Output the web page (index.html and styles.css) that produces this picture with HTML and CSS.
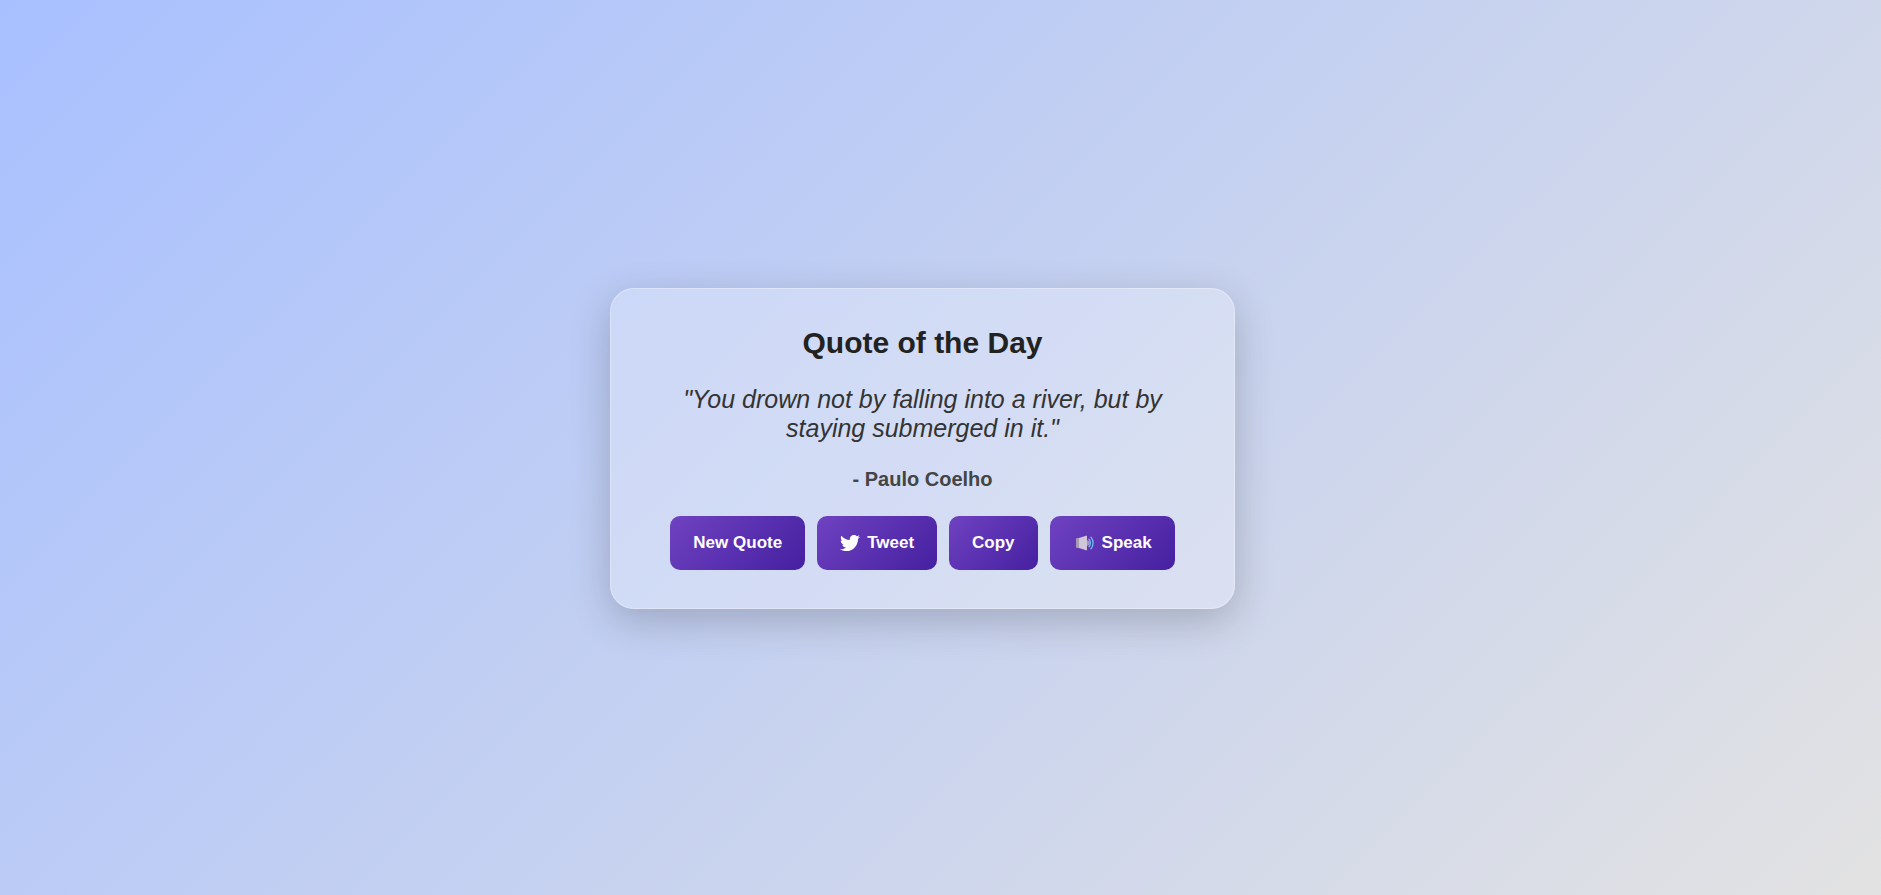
FILE: index.html
```html
<!DOCTYPE html>
<html lang="en">
<head>
    <meta charset="UTF-8">
    <meta name="viewport" content="width=device-width, initial-scale=1.0">
    <link rel="stylesheet" href="styles.css">
    <title>Quote of the Day</title>
</head>
<body>
    <main class="quote-box">
        <h1 class="title">Quote of the Day</h1>
        <p class="quote">"You drown not by falling into a river, but by staying submerged in it."</p>
        <p class="author">- Paulo Coelho</p>

        <div class="buttons">
            <button class="btn" type="button">New Quote</button>
            <button class="btn" type="button">
                <svg class="icon" viewBox="0 0 512 512" aria-hidden="true">
                    <path fill="#fff" d="M459.37 151.716c.325 4.548.325 9.097.325 13.645 0 138.72-105.583 298.558-298.558 298.558-59.452 0-114.68-17.219-161.137-47.106 8.447.974 16.568 1.299 25.34 1.299 49.055 0 94.213-16.568 130.274-44.832-46.132-.975-84.792-31.188-98.112-72.772 6.498.974 12.995 1.624 19.818 1.624 9.421 0 18.843-1.3 27.614-3.573-48.081-9.747-84.143-51.98-84.143-102.985v-1.299c13.969 7.797 30.214 12.67 47.431 13.319-28.264-18.843-46.781-51.005-46.781-87.391 0-19.492 5.197-37.36 14.294-52.954 51.655 63.675 129.3 105.258 216.365 109.807-1.624-7.797-2.599-15.918-2.599-24.04 0-57.828 46.782-104.934 104.934-104.934 30.213 0 57.502 12.67 76.67 33.137 23.715-4.548 46.456-13.32 66.599-25.34-7.798 24.366-24.366 44.833-46.132 57.827 21.117-2.273 41.584-8.122 60.426-16.243-14.292 20.791-32.161 39.308-52.628 54.253z"/>
                </svg>
                Tweet
            </button>
            <button class="btn" type="button">Copy</button>
            <button class="btn" type="button">
                <svg class="icon icon-speaker" viewBox="0 0 22 20" aria-hidden="true">
                    <path fill="#a69bb0" d="M4 5h3v10H4a1 1 0 0 1-1-1V6a1 1 0 0 1 1-1z"/>
                    <path fill="#d0c6da" d="M6 5l7-2.200h1v14.400h-1L6 15z"/>
                    <path fill="#a295c4" d="M14 7.200a2.800 2.800 0 0 1 0 5.600z"/>
                    <path fill="none" stroke="#6fc0f7" stroke-width="1.300" stroke-linecap="round" d="M16 6.200q2.800 3.800 0 7.600M18 4.200q4.200 5.800 0 11.600"/>
                </svg>
                Speak
            </button>
        </div>
    </main>
</body>
</html>
```
FILE: styles.css
```css
*{box-sizing: border-box; margin: 0; padding: 0; font-family: "Liberation Sans", Arial, sans-serif;}

body{min-height: 100vh; display: flex; justify-content: center; align-items: center; padding: 2px 36px 0 0; background: linear-gradient(135deg, #a8c0ff, #e2e2e2);}

.quote-box{width: 90%; max-width: 625px; padding: 37px 48px 38px; text-align: center; background: rgba(255, 255, 255, 0.25); border: 1px solid rgba(255, 255, 255, 0.3); border-radius: 24px; box-shadow: 0 12px 40px rgba(0, 0, 0, 0.2);}

.title{margin-bottom: 25px; font-size: 30px; line-height: 34px; color: #222;}
.quote{margin-bottom: 24px; font-size: 25px; line-height: 29px; font-style: italic; color: #333;}
.author{margin-bottom: 25px; font-size: 20px; line-height: 24px; font-weight: bold; color: #444;}

.buttons{display: flex; flex-wrap: wrap; justify-content: center; gap: 12px;}
.btn{height: 54px; padding: 0 23px; display: flex; align-items: center; gap: 7px; border: none; border-radius: 10px; background: linear-gradient(135deg, #6f42c1, #4520a0); color: #fff; font-size: 17px; font-weight: bold; cursor: pointer;}
.icon{width: 20px; height: 20px;}
.icon-speaker{width: 22px;}
```
